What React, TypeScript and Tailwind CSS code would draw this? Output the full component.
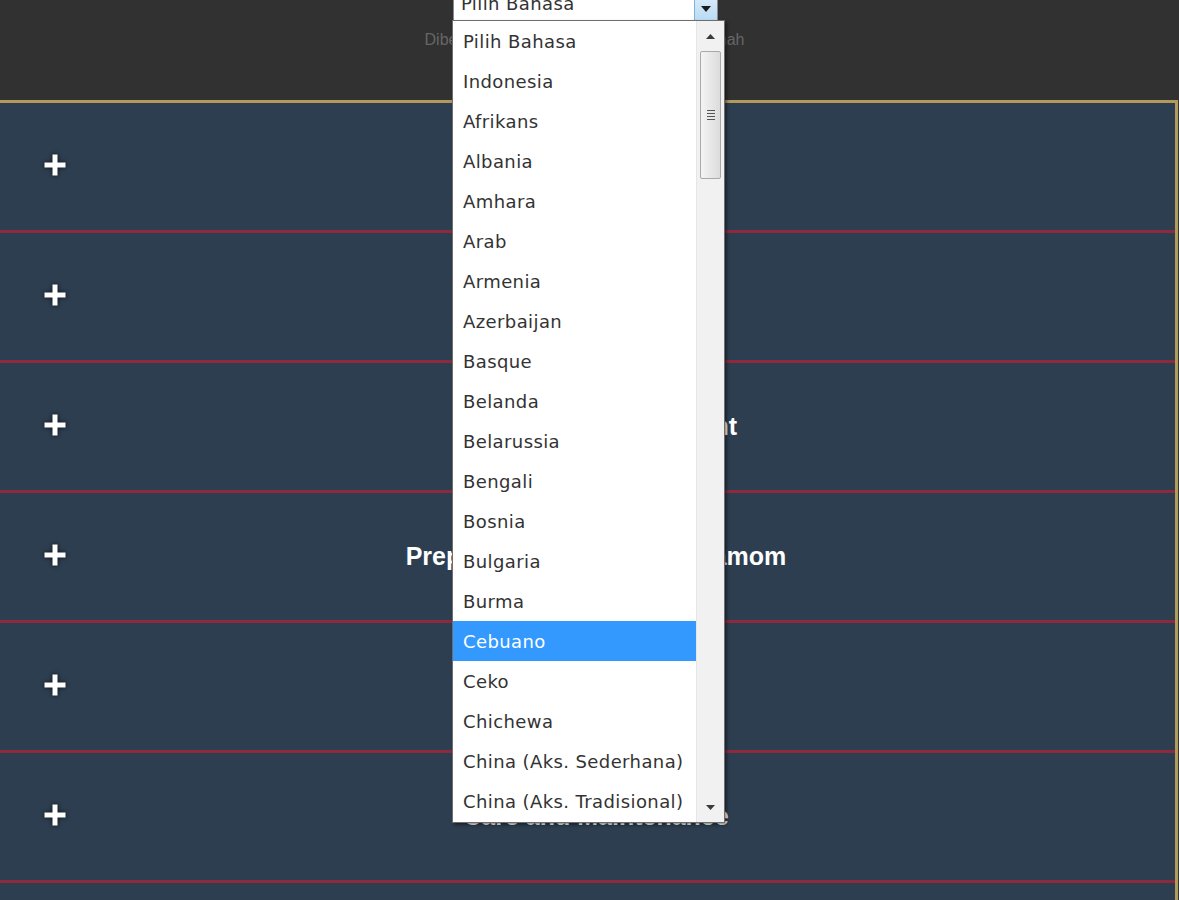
import React from "react";

const languages = [
  "Pilih Bahasa",
  "Indonesia",
  "Afrikans",
  "Albania",
  "Amhara",
  "Arab",
  "Armenia",
  "Azerbaijan",
  "Basque",
  "Belanda",
  "Belarussia",
  "Bengali",
  "Bosnia",
  "Bulgaria",
  "Burma",
  "Cebuano",
  "Ceko",
  "Chichewa",
  "China (Aks. Sederhana)",
  "China (Aks. Tradisional)",
];

const sections = [
  "Introduction",
  "Varieties",
  "Seedling Establishment",
  "Preparing a Field for Cardamom",
  "Planting",
  "Care and Maintenance",
  "Harvesting",
];

function PlusIcon() {
  return (
    <svg width="22" height="22" viewBox="0 0 22 22" className="drop-shadow-[0_0_2px_rgba(0,0,0,0.8)]">
      <path d="M11 3v16M3 11h16" stroke="#ffffff" strokeWidth="5" strokeLinecap="square" />
    </svg>
  );
}

function LanguageDropdown() {
  return (
    <div style={{ fontFamily: '"DejaVu Sans", Verdana, sans-serif' }}>
      {/* select box, scrolled partly off the top */}
      <div className="absolute left-[453px] top-[-13px] flex h-[34px] w-[265px] items-center border border-[#8a8a8a] bg-white">
        <span className="flex-1 pl-[7px] text-[18px] leading-none tracking-[0.4px] text-[#333]">Pilih Bahasa</span>
        <div className="flex h-full w-[23px] items-center justify-center border-l border-[#7fb2d6] bg-gradient-to-b from-[#e3f2fc] to-[#b9dcf3] pt-[10px]">
          <svg width="10" height="6" viewBox="0 0 10 6">
            <path d="M0 0h10L5 6z" fill="#1c1c1c" />
          </svg>
        </div>
      </div>

      {/* open list */}
      <div className="absolute left-[452px] top-[20px] flex h-[803px] w-[273px] border border-[#6e6e6e] bg-white shadow-[2px_2px_3px_rgba(0,0,0,0.45)]">
        <ul className="w-[243px]">
          {languages.map((lang) => (
            <li
              key={lang}
              className={
                lang === "Cebuano"
                  ? "flex h-[40px] items-center bg-[#3399ff] pl-[10px] text-[18px] tracking-[0.4px] text-white"
                  : "flex h-[40px] items-center pl-[10px] text-[18px] tracking-[0.4px] text-[#333]"
              }
            >
              {lang}
            </li>
          ))}
        </ul>
        <div className="flex w-[28px] flex-col items-center border-l border-[#e6e6e6] bg-[#f1f1f1]">
          <div className="flex h-[30px] items-center justify-center">
            <svg width="9" height="5" viewBox="0 0 9 5">
              <path d="M0 5h9L4.5 0z" fill="#3a3a3a" />
            </svg>
          </div>
          <div className="flex h-[128px] w-[21px] items-center justify-center rounded-[2px] border border-[#a9a9a9] bg-gradient-to-r from-[#f4f4f4] to-[#dcdcdc]">
            <div className="flex flex-col gap-[2px]">
              <div className="h-px w-[8px] bg-[#555]" />
              <div className="h-px w-[8px] bg-[#555]" />
              <div className="h-px w-[8px] bg-[#555]" />
              <div className="h-px w-[8px] bg-[#555]" />
            </div>
          </div>
          <div className="flex-1" />
          <div className="flex h-[30px] items-center justify-center">
            <svg width="9" height="5" viewBox="0 0 9 5">
              <path d="M0 0h9L4.5 5z" fill="#3a3a3a" />
            </svg>
          </div>
        </div>
      </div>
    </div>
  );
}

export default function App() {
  return (
    <div
      className="relative h-[900px] w-[1179px] overflow-hidden bg-[#323232]"
      style={{ fontFamily: '"Liberation Sans", Arial, sans-serif' }}
    >
      <header className="flex h-[100px] justify-center bg-[#313131] pr-[10px] pt-[28px]">
        <p className="text-[16px] text-[#666]">Diberdayakan oleh layanan Google Terjemah</p>
      </header>

      <main className="w-[1178px] border-r-[3px] border-t-[3px] border-[#b09a5c] bg-[#2d3e50]">
        {sections.map((title) => (
          <div key={title} className="flex h-[130px] items-center border-b-[3px] border-[#8e2a3d]">
            <div className="flex w-[110px] justify-center pb-[4px]">
              <PlusIcon />
            </div>
            <h2 className="flex-1 pr-[93px] text-center text-[25px] font-bold text-white">{title}</h2>
          </div>
        ))}
      </main>

      <LanguageDropdown />
    </div>
  );
}
